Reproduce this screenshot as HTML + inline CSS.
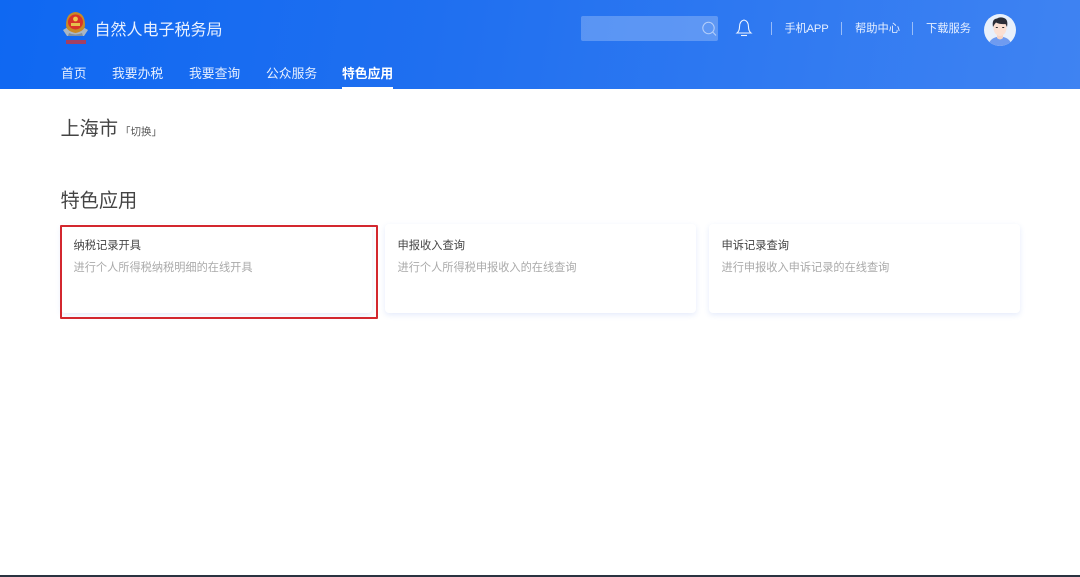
<!DOCTYPE html>
<html lang="zh-CN">
<head>
<meta charset="utf-8">
<style>
html,body{margin:0;padding:0;width:1080px;height:577px;overflow:hidden;background:#fff;font-family:"Liberation Sans","Noto Sans CJK SC",sans-serif}
.a{position:absolute;white-space:nowrap;line-height:1}
#hd{position:absolute;left:0;top:0;width:1080px;height:89px;background:linear-gradient(100deg,#0f68f2 0%,#1f6ff0 40%,#3f83f2 100%)}
.nav{color:#e6efff;font-size:12.8px;top:68px}
.top{color:#e6efff;font-size:11.25px;top:24px}
.sep{position:absolute;top:22px;width:1px;height:13px;background:rgba(255,255,255,.5)}
.card{position:absolute;top:224px;width:311px;height:89px;background:#fff;border-radius:4px;box-shadow:0 2px 6px rgba(70,110,230,.14)}
.t{position:absolute;left:12.5px;top:16px;font-size:11.25px;color:#444;line-height:13px;white-space:nowrap}
.d{position:absolute;left:12.5px;top:38px;font-size:11.2px;color:#aaa;line-height:13px;white-space:nowrap}
</style>
</head>
<body>
<div id="hd">
<svg class="a" style="left:62px;top:11px" width="27" height="35" viewBox="0 0 27 35">
<path d="M1 19 L6 16 H21 L26 19 L22 25 H5 Z" fill="#a9b6c4"/>
<path d="M4 14 Q4 2 13.5 1 Q23 2 23 14 Q23 20 13.5 22 Q4 20 4 14Z" fill="#c98a25"/>
<circle cx="13.5" cy="11" r="7.5" fill="#d8342a"/>
<path d="M9 12 h9 v3 h-9z" fill="#e6c04c"/>
<circle cx="13.5" cy="8" r="2.4" fill="#f0c84a"/>
<path d="M7 22 q6.500 3 13 0 l1 3 h-15z" fill="#7f8f9f"/>
<rect x="4" y="29" width="20" height="4" fill="#c8363d" opacity=".8"/>
</svg>
<div class="a" style="left:94.500px;top:23px;font-size:16px;color:#e9f1ff">自然人电子税务局</div>
<div class="a nav" style="left:61px">首页</div>
<div class="a nav" style="left:112px">我要办税</div>
<div class="a nav" style="left:189px">我要查询</div>
<div class="a nav" style="left:266px">公众服务</div>
<div class="a nav" style="left:342px;color:#fff;font-weight:700">特色应用</div>
<div style="position:absolute;left:342px;top:87px;width:51px;height:2px;background:#fff"></div>
<div style="position:absolute;left:581px;top:16px;width:137px;height:25px;border-radius:2px;background:rgba(255,255,255,.24)"></div>
<svg class="a" style="left:701px;top:20px" width="17" height="17" viewBox="0 0 17 17" fill="none" stroke="#b5cffa" stroke-width="1">
<circle cx="7.500" cy="8" r="5.700"/><path d="M11.700 12 L15 15.500"/>
</svg>
<svg class="a" style="left:735px;top:18px" width="18" height="20" viewBox="0 0 18 20" fill="none" stroke="#eef4ff" stroke-width="1.100">
<path d="M2 15 Q4.500 13 4.500 9 Q4.500 3 9 2 Q13.500 3 13.500 9 Q13.500 13 16 15 Z"/><path d="M6 17.500 H12"/>
</svg>
<div class="sep" style="left:771px"></div>
<div class="a top" style="left:784.500px;letter-spacing:-.2px">手机APP</div>
<div class="sep" style="left:841px"></div>
<div class="a top" style="left:855px">帮助中心</div>
<div class="sep" style="left:912px"></div>
<div class="a top" style="left:926px">下载服务</div>
<svg class="a" style="left:984px;top:14px" width="32" height="32" viewBox="0 0 32 32">
<defs><clipPath id="c"><circle cx="16" cy="16" r="16"/></clipPath></defs>
<g clip-path="url(#c)">
<rect width="32" height="32" fill="#e8f0fb"/>
<path d="M4 32 Q6 24 13 23 H19 Q26 24 28 32Z" fill="#6f9bf0"/>
<path d="M13 19 h6 v5 q-3 3 -6 0z" fill="#f6d3c4"/>
<ellipse cx="16" cy="14" rx="6.500" ry="8" fill="#fbe0d3"/>
<path d="M9 13 Q7.500 5 13 4.500 Q16 2.500 20 4 Q24.500 5.500 23 13 L21.500 10 Q16 10.500 12 8.500 Q10.500 10 9 13Z" fill="#2b2e38"/>
<rect x="11.800" y="13" width="2" height="1" fill="#333"/><rect x="18.200" y="13" width="2" height="1" fill="#333"/>
</g>
</svg>
</div>
<div class="a" style="left:60.500px;top:120px;font-size:19.2px;color:#444">上海市</div>
<div class="a" style="left:120px;top:127px;font-size:10.5px;color:#555">「切换」</div>
<div class="a" style="left:60.500px;top:192px;font-size:19.2px;color:#444">特色应用</div>
<div class="card" style="left:61px"><div class="t">纳税记录开具</div><div class="d">进行个人所得税纳税明细的在线开具</div></div>
<div class="card" style="left:385px"><div class="t">申报收入查询</div><div class="d">进行个人所得税申报收入的在线查询</div></div>
<div class="card" style="left:709px"><div class="t">申诉记录查询</div><div class="d">进行申报收入申诉记录的在线查询</div></div>
<div style="position:absolute;left:60px;top:225px;width:314px;height:90px;border:2px solid #d3272f;border-radius:1px"></div>
<div style="position:absolute;left:0;top:575px;width:1080px;height:2px;background:#2a3340"></div>
</body>
</html>
